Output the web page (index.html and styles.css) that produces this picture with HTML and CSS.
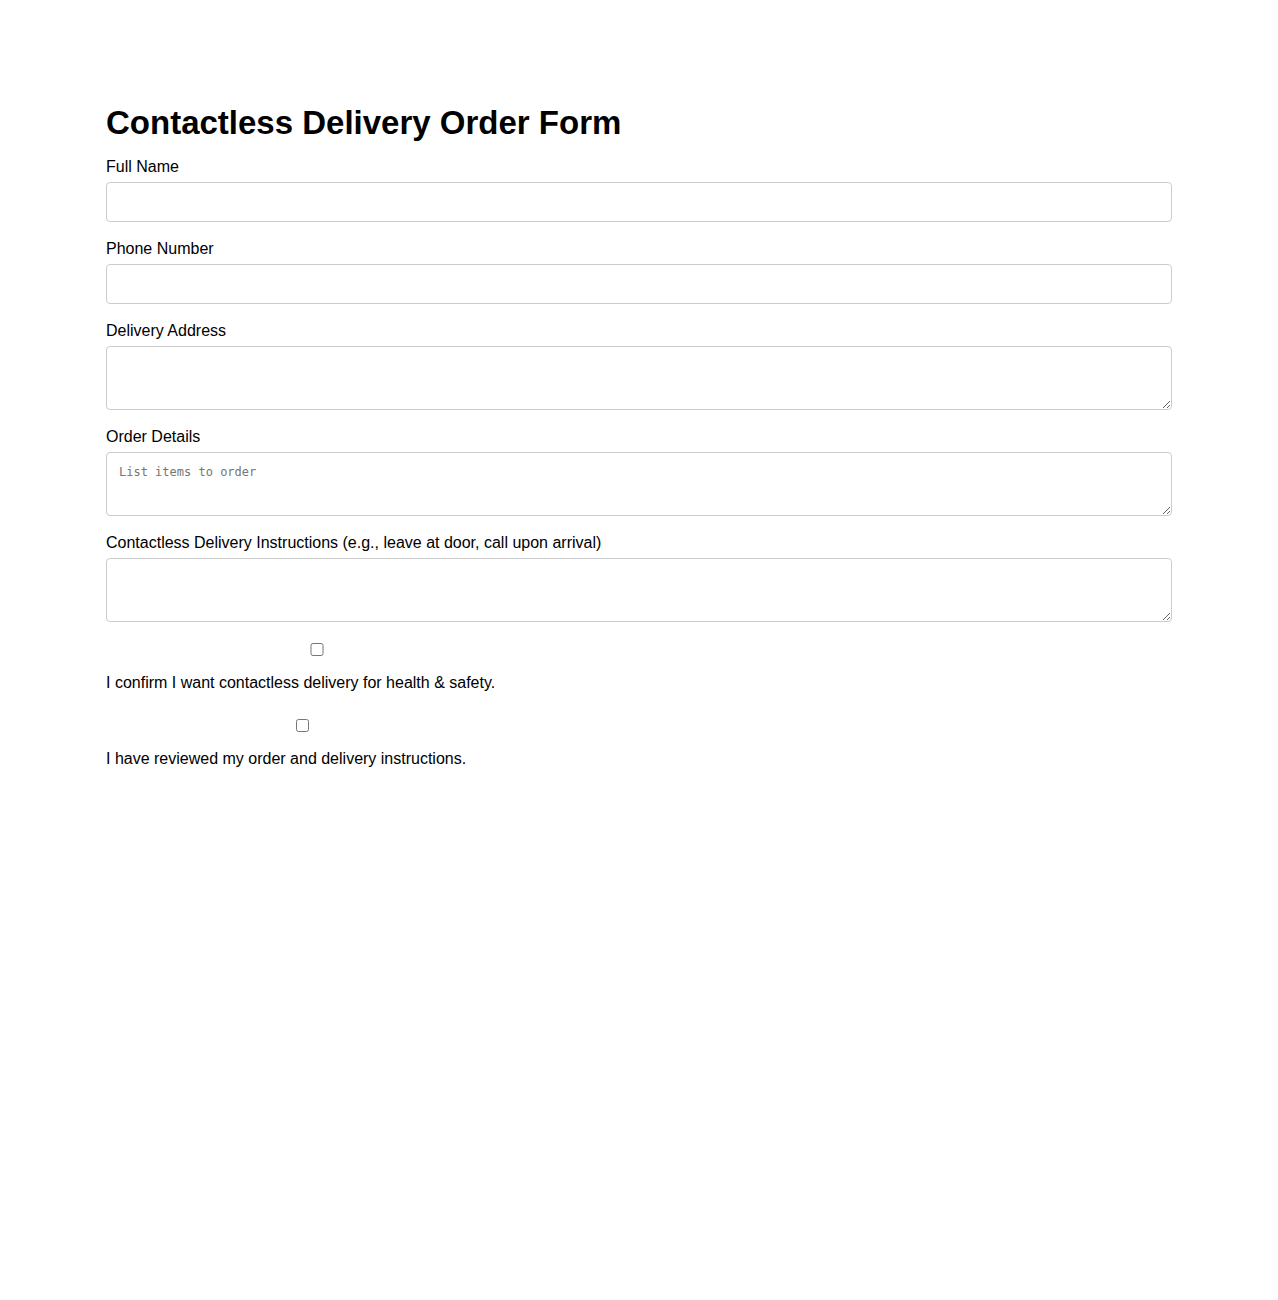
FILE: index.html
```html
<!DOCTYPE html>
<html lang="en">
<head>
    <meta charset="UTF-8">
    <meta name="viewport" content="width=device-width, initial-scale=1.0">
    <title>Contactless Delivery Order Form</title>
    <link rel="stylesheet" href="styles.css">
</head>
<body>
    <div class="container">
        <h1>Contactless Delivery Order Form</h1>

        <form class="order-form">
            <div class="form-group">
                <label for="fullName">Full Name</label>
                <input type="text" id="fullName" class="text-input">
            </div>

            <div class="form-group">
                <label for="phone">Phone Number</label>
                <input type="tel" id="phone" class="text-input">
            </div>

            <div class="form-group">
                <label for="address">Delivery Address</label>
                <textarea id="address" class="text-area"></textarea>
            </div>

            <div class="form-group">
                <label for="orderDetails">Order Details</label>
                <textarea id="orderDetails" class="text-area" placeholder="List items to order"></textarea>
            </div>

            <div class="form-group">
                <label for="instructions">Contactless Delivery Instructions (e.g., leave at door, call upon arrival)</label>
                <textarea id="instructions" class="text-area"></textarea>
            </div>

            <div class="form-group">
                <label class="check-label"><input type="checkbox" id="confirmContactless"> I confirm I want contactless delivery for health &amp; safety.</label>
            </div>

            <div class="form-group">
                <label class="check-label"><input type="checkbox" id="confirmReview"> I have reviewed my order and delivery instructions.</label>
            </div>
        </form>
    </div>
</body>
</html>
```

FILE: styles.css
```css
* {
    box-sizing: border-box;
}

body {
    margin: 0;
    background-color: white;
    color: #000;
    font-family: Arial, "Liberation Sans", sans-serif;
    font-size: 16px;
}

.container {
    max-width: 1066px;
    margin: 0 auto;
    padding: 84px 0 40px;
}

h1 {
    font-size: 33px;
    margin: 20px 0 16px;
}

/* form fields */
.form-group {
    margin-bottom: 18px;
}

.form-group label {
    display: block;
    margin-bottom: 6px;
}

.text-input,
.text-area {
    display: block;
    width: 100%;
    padding: 10px;
    border: 1px solid #ccc;
    border-radius: 4px;
    background: #fff;
}

.text-input {
    height: 40px;
    font-family: Arial, "Liberation Sans", sans-serif;
    font-size: 16px;
}

.text-area {
    height: 64px;
    padding: 12px;
    font-family: "DejaVu Sans Mono", monospace;
    font-size: 12px;
}

.text-area::placeholder {
    color: #757575;
}

/* checkboxes sit on their own line above the text */
.form-group .check-label {
    display: inline-block;
    margin-bottom: 6px;
}

.check-label input {
    width: 100%;
    margin: 3px 3px 18px 4px;
}
```
